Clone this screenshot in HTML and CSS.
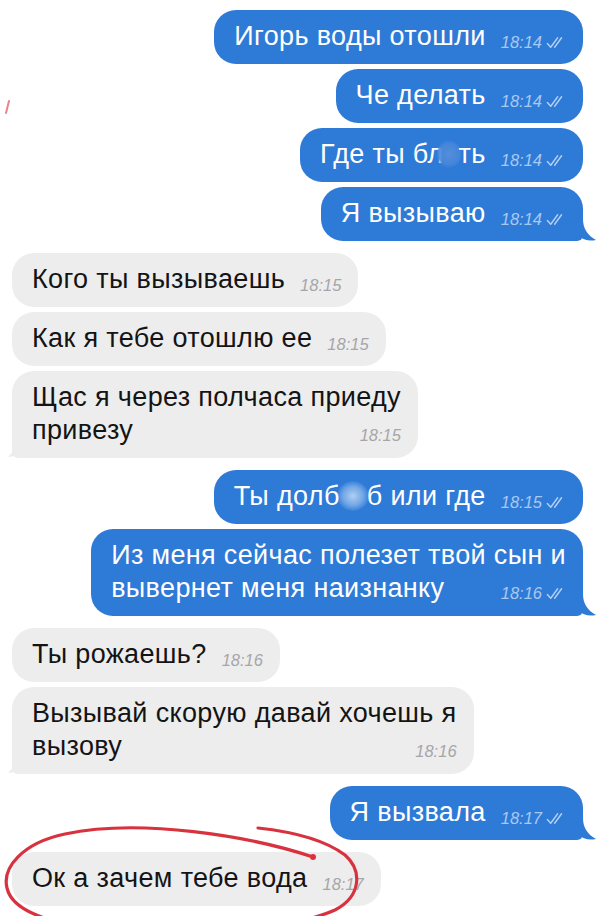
FILE: index.html
```html
<!DOCTYPE html>
<html lang="ru">
<head>
<meta charset="utf-8">
<title>Чат</title>
<link rel="stylesheet" href="styles.css">
</head>
<body>
<div class="chat">
  <div class="group out">
    <div class="msg"><span class="txt">Игорь воды отошли</span><span class="meta"><span class="time">18:14</span><svg class="check" viewBox="0 0 18 12"><path d="M1.5 7 L4.6 10.4 L11 1.6"/><path d="M8.2 10.4 L14.6 1.6"/></svg></span></div>
    <div class="msg"><span class="txt">Че делать</span><span class="meta"><span class="time">18:14</span><svg class="check" viewBox="0 0 18 12"><path d="M1.5 7 L4.6 10.4 L11 1.6"/><path d="M8.2 10.4 L14.6 1.6"/></svg></span></div>
    <div class="msg"><span class="txt">Где ты бл<span class="blot blot-blue"></span>ть</span><span class="meta"><span class="time">18:14</span><svg class="check" viewBox="0 0 18 12"><path d="M1.5 7 L4.6 10.4 L11 1.6"/><path d="M8.2 10.4 L14.6 1.6"/></svg></span></div>
    <div class="msg tail"><span class="txt">Я вызываю</span><span class="meta"><span class="time">18:14</span><svg class="check" viewBox="0 0 18 12"><path d="M1.5 7 L4.6 10.4 L11 1.6"/><path d="M8.2 10.4 L14.6 1.6"/></svg></span><svg class="tail-svg" viewBox="0 0 18 22"><path d="M0 0 L3 0 C3 9 7 16 16 21 C9 22.5 4 21 0 18 Z"/></svg></div>
  </div>

  <div class="group in">
    <div class="msg"><span class="txt">Кого ты вызываешь</span><span class="meta"><span class="time">18:15</span></span></div>
    <div class="msg"><span class="txt">Как я тебе отошлю ее</span><span class="meta"><span class="time">18:15</span></span></div>
    <div class="msg multi tail"><span class="txt">Щас я через полчаса приеду<br>привезу</span><span class="meta"><span class="time">18:15</span></span><svg class="tail-svg" viewBox="0 0 18 22"><path d="M18 0 L15 0 C15 9 11 16 2 21 C9 22.5 14 21 18 18 Z"/></svg></div>
  </div>

  <div class="group out">
    <div class="msg"><span class="txt">Ты долб<span class="blot blot-white"></span>б или где</span><span class="meta"><span class="time">18:15</span><svg class="check" viewBox="0 0 18 12"><path d="M1.5 7 L4.6 10.4 L11 1.6"/><path d="M8.2 10.4 L14.6 1.6"/></svg></span></div>
    <div class="msg multi tail"><span class="txt">Из меня сейчас полезет твой сын и<br>вывернет меня наизнанку</span><span class="meta"><span class="time">18:16</span><svg class="check" viewBox="0 0 18 12"><path d="M1.5 7 L4.6 10.4 L11 1.6"/><path d="M8.2 10.4 L14.6 1.6"/></svg></span><svg class="tail-svg" viewBox="0 0 18 22"><path d="M0 0 L3 0 C3 9 7 16 16 21 C9 22.5 4 21 0 18 Z"/></svg></div>
  </div>

  <div class="group in">
    <div class="msg"><span class="txt">Ты рожаешь?</span><span class="meta"><span class="time">18:16</span></span></div>
    <div class="msg multi tail"><span class="txt">Вызывай скорую давай хочешь я<br>вызову</span><span class="meta"><span class="time">18:16</span></span><svg class="tail-svg" viewBox="0 0 18 22"><path d="M18 0 L15 0 C15 9 11 16 2 21 C9 22.5 14 21 18 18 Z"/></svg></div>
  </div>

  <div class="group out">
    <div class="msg tail"><span class="txt">Я вызвала</span><span class="meta"><span class="time">18:17</span><svg class="check" viewBox="0 0 18 12"><path d="M1.5 7 L4.6 10.4 L11 1.6"/><path d="M8.2 10.4 L14.6 1.6"/></svg></span><svg class="tail-svg" viewBox="0 0 18 22"><path d="M0 0 L3 0 C3 9 7 16 16 21 C9 22.5 4 21 0 18 Z"/></svg></div>
  </div>

  <div class="group in">
    <div class="msg"><span class="txt">Ок а зачем тебе вода</span><span class="meta"><span class="time">18:17</span></span></div>
  </div>
</div>

<svg class="annotation" viewBox="0 0 600 916" width="600" height="916">
  <path class="pen" d="M313 857 C 250 836, 140 818, 65 834 C 22 843, 2 868, 7 888 C 12 910, 45 924, 110 930 C 190 937, 290 930, 335 910 C 362 896, 362 870, 345 855 C 325 840, 295 832, 258 828"/>
  <circle class="pen-dot" cx="313" cy="857" r="3"/>
  <path class="pen faint" d="M9 101 L6 113"/>
</svg>
</body>
</html>
```

FILE: styles.css
```css
* { box-sizing: border-box; }

html, body {
  margin: 0;
  padding: 0;
  background: #ffffff;
}

body {
  width: 600px;
  height: 916px;
  overflow: hidden;
  position: relative;
  font-family: "Liberation Sans", Arial, sans-serif;
}

.chat {
  display: flex;
  flex-direction: column;
  gap: 12px;
  padding-top: 10px;
}

.group {
  display: flex;
  flex-direction: column;
  gap: 5px;
}

.group.out {
  align-items: flex-end;
  padding-right: 17px;
}

.group.in {
  align-items: flex-start;
  padding-left: 12px;
}

.msg {
  position: relative;
  padding: 10px 17px 11px 20px;
  border-radius: 22px;
  font-size: 27px;
  letter-spacing: 0.35px;
  line-height: 33px;
  white-space: nowrap;
}

.out .msg {
  background: #2e7ad7;
  color: #ffffff;
}

.in .msg {
  background: #ededee;
  color: #141414;
}

.out .msg.tail { border-bottom-right-radius: 6px; }
.in .msg.tail { border-bottom-left-radius: 6px; }

.meta {
  display: inline-flex;
  align-items: center;
  gap: 3px;
  margin-left: 15px;
  font-size: 16.5px;
  line-height: 16px;
  letter-spacing: 0;
  font-style: italic;
  vertical-align: -3px;
}

.out .meta { color: #a9c9f1; }
.in .meta { color: #a6a6a8; }

.check {
  width: 21px;
  height: 13px;
  fill: none;
  stroke: #b4d0f3;
  stroke-width: 1.3;
  stroke-linecap: round;
  stroke-linejoin: round;
}

.multi .meta {
  float: right;
  margin-top: 13px;
}

.tail-svg {
  position: absolute;
  bottom: 0;
  width: 18px;
  height: 22px;
}

.out .tail-svg {
  left: calc(100% - 3px);
  fill: #2e7ad7;
}

.in .tail-svg {
  right: calc(100% - 3px);
  width: 8px;
  height: 12px;
  fill: #ededee;
}

.blot {
  display: inline-block;
  width: 24px;
  height: 30px;
  vertical-align: -6px;
  border-radius: 50%;
}

.blot-blue {
  margin-left: -7px;
  margin-right: -2px;
  background: radial-gradient(circle, rgba(88,143,218,0.95) 0%, rgba(70,135,218,0.9) 55%, rgba(46,122,215,0) 75%);
}

.blot-white {
  width: 32px;
  margin-left: -3px;
  margin-right: -2px;
  background: radial-gradient(ellipse, rgba(220,234,250,0.75) 0%, rgba(180,210,245,0.5) 45%, rgba(46,122,215,0) 75%);
}

.annotation {
  position: absolute;
  top: 0;
  left: 0;
  pointer-events: none;
}

.pen {
  fill: none;
  stroke: #d8323f;
  stroke-width: 3.2;
  stroke-linecap: round;
}

.pen.faint {
  stroke: #e6868c;
  stroke-width: 2;
}

.pen-dot { fill: #d8323f; }
```
